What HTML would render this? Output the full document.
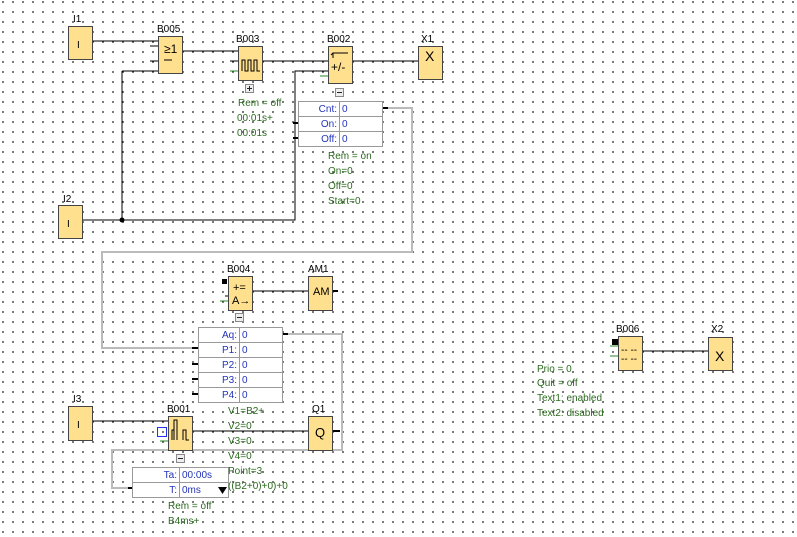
<!DOCTYPE html>
<html><head><meta charset="utf-8"><style>
html,body{margin:0;padding:0;width:797px;height:537px;overflow:hidden;background:#fff;}
.bg{position:absolute;left:0;top:0;width:797px;height:537px;
background-image:radial-gradient(circle,#222 0.7px,transparent 1px);background-size:10px 10px;background-position:-2px -3px;}
svg{position:absolute;left:0;top:0;}
text{font-family:"Liberation Sans",sans-serif;font-size:10px;}
.g{fill:#2a6a1e}.b{fill:#2233bb}.k{fill:#000}
.blk{fill:#ffe08e;stroke:#444;stroke-width:1}
.tb{fill:#fff;stroke:#999;stroke-width:1}
</style></head><body><div class="bg"></div>
<svg width="797" height="537" viewBox="0 0 797 537">
<g stroke="#000" stroke-width="1" fill="none">
<path d="M92 41H158M183 51H238M262 61H418M122 71H158M122 71V220M82 220H295V71H328M252 291H308M192 431H308M92 421H168M642 351H708"/>
<path d="M150 46H158M150 61H158M230 61H238M320 61H328M225 296H228"/>
</g>
<g stroke="#2a8a2a"><path d="M230 71H238M320 76H328M220 301H228M610 346H618M610 356H618M160 441H168"/></g>
<circle cx="122" cy="220" r="2.5" fill="#000"/>
<g stroke="#bbb" stroke-width="2" fill="none">
<path d="M388 108H412V252H102V348H192"/>
<path d="M288 334H342V450H112V488H128"/>
</g>
<g stroke="#000" stroke-width="2"><path d="M382 108H388M282 334H288M293 123H298M293 138H298M192 348H198M192 364H198M192 379H198M192 394H198M128 488H133M332 431H340M332 291H338"/></g>
<rect class="blk" x="68.5" y="26.5" width="24" height="33"/>
<rect class="blk" x="158.5" y="36.5" width="24" height="37"/>
<rect class="blk" x="238.5" y="46.5" width="24" height="34"/>
<rect class="blk" x="328.5" y="46.5" width="24" height="37"/>
<rect class="blk" x="418.5" y="46.5" width="24" height="33"/>
<rect class="blk" x="58.5" y="205.5" width="24" height="33"/>
<rect class="blk" x="228.5" y="276.5" width="24" height="34"/>
<rect class="blk" x="308.5" y="276.5" width="24" height="34"/>
<rect class="blk" x="68.5" y="406.5" width="24" height="34"/>
<rect class="blk" x="168.5" y="416.5" width="24" height="34"/>
<rect class="blk" x="308.5" y="416.5" width="24" height="34"/>
<rect class="blk" x="618.5" y="336.5" width="24" height="34"/>
<rect class="blk" x="708.5" y="337.5" width="24" height="33"/>
<rect x="222" y="279" width="5" height="5" fill="#000"/>
<rect x="612" y="339" width="6" height="6" fill="#000"/>
<g class="k" style="font-size:13px">
<text x="77" y="48">I</text><text x="67" y="227">I</text><text x="77" y="428">I</text>
<text x="425" y="61" style="font-size:14px">X</text><text x="715" y="361" style="font-size:14px">X</text>
<text x="315" y="437" style="font-size:13px">Q</text>
<text x="313" y="295" style="font-size:11px">AM</text>
<text x="164" y="53" style="font-size:12px">≥1</text>
<text x="331" y="71" style="font-size:12px">+/-</text>
<text x="233" y="291" style="font-size:11px">+=</text>
<text x="232" y="304" style="font-size:11px">A→</text>
<text x="621" y="353" style="font-size:10px">-- --</text>
<text x="621" y="362" style="font-size:10px">-- --</text>
</g>
<g stroke="#000" fill="none" stroke-width="1">
<path d="M164 60H172"/>
<path d="M242 71V60H245V71H248V60H251V71H254V60H257V71H260"/>
<path d="M333 58V53H340H348M333 53l-2 2"/>
<path d="M172 440V430H174V420H177V440M174 440V430M183 440V430H186V440H189"/>
</g>
<rect x="157.5" y="427.5" width="9" height="9" fill="none" stroke="#2233ee"/>
<g class="k">
<text x="73" y="22">I1</text><text x="157" y="32">B005</text><text x="236" y="42">B003</text>
<text x="327" y="42">B002</text><text x="421" y="42">X1</text><text x="63" y="202">I2</text>
<text x="227" y="272">B004</text><text x="308" y="272">AM1</text><text x="73" y="402">I3</text>
<text x="167" y="412">B001</text><text x="312" y="412">Q1</text><text x="616" y="332">B006</text><text x="711" y="332">X2</text>
</g>
<g fill="#eee" stroke="#888"><rect x="245.5" y="84.5" width="8" height="8"/><rect x="335.5" y="88.5" width="8" height="8"/><rect x="235.5" y="313.5" width="8" height="8"/><rect x="176.5" y="454.5" width="8" height="8"/></g>
<g stroke="#223" ><path d="M247 88.5H252M249.5 86V91M337 92.5H342M237 317.5H242M178 458.5H183"/></g>
<rect class="tb" x="298.5" y="101.5" width="84" height="45"/>
<path d="M298 116.5H382M298 131.5H382M339.5 101V146" stroke="#999"/>
<g class="b"><text x="337" y="112" text-anchor="end">Cnt:</text><text x="337" y="127" text-anchor="end">On:</text><text x="337" y="142" text-anchor="end">Off:</text>
<text x="342" y="112">0</text><text x="342" y="127">0</text><text x="342" y="142">0</text></g>
<rect class="tb" x="198.5" y="327.5" width="84" height="75"/>
<path d="M198 342.5H282M198 357.5H282M198 372.5H282M198 387.5H282M239.5 327V402" stroke="#999"/>
<g class="b"><text x="237" y="338" text-anchor="end">Aq:</text><text x="237" y="353" text-anchor="end">P1:</text><text x="237" y="368" text-anchor="end">P2:</text><text x="237" y="383" text-anchor="end">P3:</text><text x="237" y="398" text-anchor="end">P4:</text>
<text x="242" y="338">0</text><text x="242" y="353">0</text><text x="242" y="368">0</text><text x="242" y="383">0</text><text x="242" y="398">0</text></g>
<rect class="tb" x="132.5" y="467.5" width="96" height="30"/>
<path d="M132 482.5H228M179.5 467V497" stroke="#999"/>
<g class="b"><text x="177" y="478" text-anchor="end">Ta:</text><text x="177" y="493" text-anchor="end">T:</text>
<text x="182" y="478">00:00s</text><text x="182" y="493">0ms</text></g>
<path d="M218 487H227L222.5 494Z" fill="#000"/>
<g class="g">
<text x="238" y="106">Rem = off</text><text x="237" y="121">00:01s+</text><text x="237" y="136">00:01s</text>
<text x="328" y="159">Rem = on</text><text x="328" y="174">On=0</text><text x="328" y="189">Off=0</text><text x="328" y="204">Start=0</text>
<text x="228" y="414">V1=B2+</text><text x="228" y="429">V2=0</text><text x="228" y="444">V3=0</text><text x="228" y="459">V4=0</text><text x="228" y="474">Point=3</text><text x="228" y="489">((B2+0)+0)+0</text>
<text x="168" y="509">Rem = off</text><text x="168" y="524">B4ms+</text>
<text x="537" y="372">Prio = 0</text><text x="537" y="386">Quit = off</text><text x="537" y="401">Text1: enabled</text><text x="537" y="416">Text2: disabled</text>
</g>
</svg></body></html>
